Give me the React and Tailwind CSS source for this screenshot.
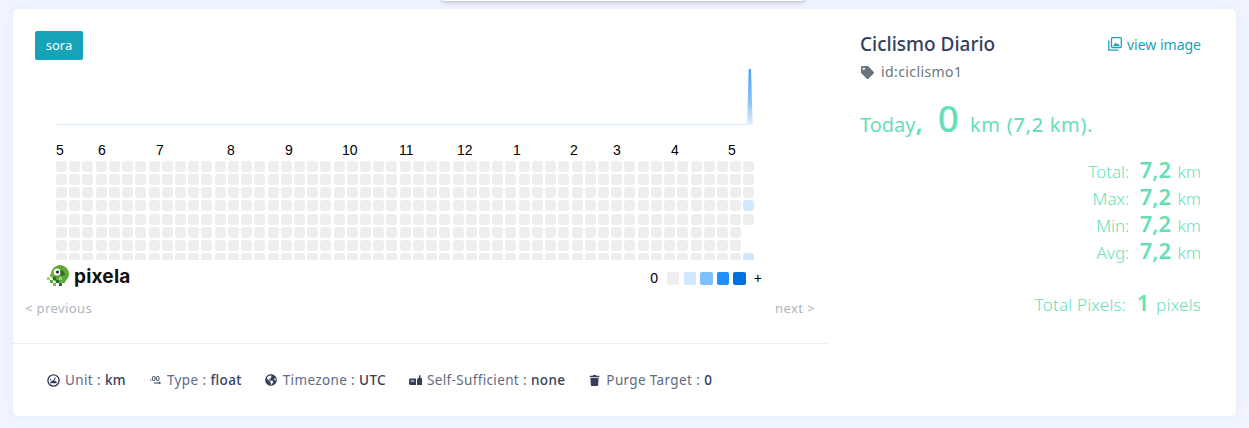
import { FaTag, FaGlobeAmericas, FaTrash } from "react-icons/fa";

const months = [
  { label: "5", width: "w-[42px]" },
  { label: "6", width: "w-[58px]" },
  { label: "7", width: "w-[71px]" },
  { label: "8", width: "w-[58px]" },
  { label: "9", width: "w-[57px]" },
  { label: "10", width: "w-[57px]" },
  { label: "11", width: "w-[58px]" },
  { label: "12", width: "w-[56px]" },
  { label: "1", width: "w-[57px]" },
  { label: "2", width: "w-[43px]" },
  { label: "3", width: "w-[58px]" },
  { label: "4", width: "w-[57px]" },
  { label: "5", width: "w-[20px]" },
];

const legend = ["bg-[#eeeeee]", "bg-[#d0e8ff]", "bg-[#7fbfff]", "bg-[#2090ff]", "bg-[#0070dd]"];

const stats = [
  { label: "Total", value: "7,2" },
  { label: "Max", value: "7,2" },
  { label: "Min", value: "7,2" },
  { label: "Avg", value: "7,2" },
];

// cell colour by column/row, the last column only has a few days
const cellClass = (col, row) => {
  if (col === 52) {
    if (row === 3 || row === 7) return "bg-[#d0e8ff]";
    if (row === 5 || row === 6) return "bg-transparent";
  }
  return "bg-[#eeeeee]";
};

const UnitIcon = () => (
  <svg width="13" height="13" viewBox="0 0 13 13" className="shrink-0">
    <circle cx="6.5" cy="6.5" r="5.6" fill="none" stroke="#34405a" strokeWidth="1.4" />
    <path d="M3 9.2a3.6 3.6 0 0 1 7 0z" fill="#34405a" />
    <path d="M6.5 7L8.4 3.6" stroke="#34405a" strokeWidth="1.1" />
    <rect x="3" y="5" width="1.2" height="1.2" fill="#34405a" />
  </svg>
);

const TypeIcon = () => (
  <svg width="11" height="9" viewBox="0 0 11 9" className="shrink-0">
    <rect x="0" y="3.4" width="1.2" height="1.2" fill="#4a6fa5" />
    <rect x="2.4" y="0.5" width="2.6" height="4" rx="1" fill="none" stroke="#34405a" />
    <rect x="6.4" y="0.5" width="2.6" height="4" rx="1" fill="none" stroke="#34405a" />
    <path d="M4 6.6h5.2V5.4L11 7l-1.8 1.6V7.5H4z" fill="#34405a" />
  </svg>
);

const SelfIcon = () => (
  <svg width="13" height="12" viewBox="0 0 13 12" className="shrink-0">
    <path d="M0 6c0-.9.6-1.4 1.4-1.4H7V11H1.4C.6 11 0 10.5 0 9.6zM1.6 6.4v1h3.6v-1z" fillRule="evenodd" fill="#34405a" />
    <path d="M8 5l1.6-1 .7-3h1l.2 3H13v7H8z" fill="#34405a" />
  </svg>
);

const ImagesIcon = () => (
  <svg width="14" height="14" viewBox="0 0 14 14" fill="none" stroke="currentColor" className="shrink-0">
    <rect x="3.5" y="0.7" width="9.8" height="9.8" rx="1" strokeWidth="1.3" />
    <path d="M0.8 3.5V13.2H10.5" strokeWidth="1.3" />
    <path d="M5 9l2.6-3.4 1.6 1.8 1-1 1.6 2.6z" fill="currentColor" stroke="none" />
  </svg>
);

const Logo = () => (
  <svg width="22" height="22" viewBox="0 0 22 22" className="shrink-0">
    <circle cx="13" cy="9" r="9" fill="#5da83a" />
    <circle cx="10" cy="7" r="3.5" fill="#ffffff" />
    <circle cx="10.5" cy="7" r="1.5" fill="#1a1a1a" />
    <path d="M13 5a6 6 0 0 1 5 5l-4 1z" fill="#2e6b20" />
    <rect x="0" y="12" width="3" height="3" fill="#a8cf7a" />
    <rect x="3" y="9" width="3" height="3" fill="#7bb84f" />
    <rect x="3" y="15" width="3" height="3" fill="#5da83a" />
    <rect x="6" y="12" width="3" height="3" fill="#2e6b20" />
    <rect x="6" y="18" width="3" height="3" fill="#7bb84f" />
    <rect x="9" y="15" width="3" height="3" fill="#2e6b20" />
    <rect x="12" y="18" width="3" height="3" fill="#2e6b20" />
    <rect x="12" y="12" width="3" height="3" fill="#a8cf7a" />
    <rect x="15" y="15" width="3" height="3" fill="#5da83a" />
  </svg>
);

const Meta = ({ icon, label, value }) => (
  <div className="flex items-center gap-[5px]">
    <span className="flex w-[13px] justify-center text-[#34405a]">{icon}</span>
    <span className="tracking-[0.35px]">
      {label}
      <span className="mx-[4px]">:</span>
      <span className="font-medium text-[#34405a]">{value}</span>
    </span>
  </div>
);

export default function App() {
  return (
    <div className="relative h-[428px] overflow-hidden bg-[#f0f5ff] px-[13px] pt-[9px] font-['Noto_Sans',sans-serif]">
      {/* bottom of a dropdown that hangs in from the top */}
      <div className="absolute left-[441px] top-[-10px] h-[11px] w-[364px] rounded bg-white shadow-[0_1px_4px_rgba(0,0,0,0.25)]" />

      <div className="flex h-[407px] rounded-[5px] bg-white shadow-[0_0_12px_rgba(200,215,250,0.3)]">
        <div className="w-[814px] shrink-0">
          <div className="h-[335px] border-b border-[#eeeeee] px-[12px] pt-[22px]">
            <span className="ml-[10px] block h-[29px] w-[48px] rounded-[2px] bg-[#17a2b8] text-center text-[13px] leading-[29px] text-white">sora</span>

            <div className="ml-[31px] mt-[9px] w-[698px]">
              <svg width="698" height="57" viewBox="0 0 698 57" className="block">
                <defs>
                  <linearGradient id="spike" x1="0" y1="0" x2="0" y2="1">
                    <stop offset="0" stopColor="#4d9ff0" />
                    <stop offset="0.6" stopColor="#8cc4f8" />
                    <stop offset="1" stopColor="#e3f0ff" />
                  </linearGradient>
                </defs>
                <path d="M0 55.5H691" stroke="#e3f0ff" strokeWidth="1.5" fill="none" />
                <path d="M691 56L692.7 0H695L696.7 56z" fill="url(#spike)" />
              </svg>

              <div className="mt-[14px] flex h-[20px] font-['Liberation_Sans',sans-serif] text-[14px] leading-[20px] text-black">
                {months.map((m, i) => (
                  <span key={i} className={`${m.width} shrink-0`}>{m.label}</span>
                ))}
              </div>

              <div className="mt-[1px] grid h-[99px] grid-cols-[repeat(53,11.5px)] auto-rows-[11px] gap-x-[1.72px] gap-y-[2.14px] overflow-hidden">
                {Array.from({ length: 53 * 8 }, (_, i) => (
                  <div key={i} className={`h-[11px] w-[11px] rounded-[3px] ${cellClass(i % 53, Math.floor(i / 53))}`} />
                ))}
              </div>
            </div>

            <div className="ml-[22px] mt-[4px] flex h-[24px] items-center">
              <Logo />
              <span className="ml-[5px] font-['Inter',sans-serif] text-[19px] font-bold leading-none tracking-[0.2px] text-[#111111]">pixela</span>
              <div className="ml-auto mr-[53px] mt-[5px] flex items-center font-['Liberation_Sans',sans-serif] text-[14px] text-black">
                <span className="mr-[9px]">0</span>
                <div className="flex gap-[4.1px]">
                  {legend.map((c) => (
                    <div key={c} className={`h-[12.5px] w-[12.5px] rounded-[2px] ${c}`} />
                  ))}
                </div>
                <span className="ml-[8px]">+</span>
              </div>
            </div>

            <div className="mt-[11px] flex justify-between text-[13px] leading-[18px] tracking-[0.4px] text-[#adb5bd]">
              <span>&lt; previous</span>
              <span>next &gt;</span>
            </div>
          </div>

          <div className="flex gap-[23px] pl-[34px] pt-[27px] text-[13.5px] leading-[18px] text-[#5f6b80]">
            <Meta icon={<UnitIcon />} label="Unit" value="km" />
            <Meta icon={<TypeIcon />} label="Type" value="float" />
            <Meta icon={<FaGlobeAmericas size={12} />} label="Timezone" value="UTC" />
            <Meta icon={<SelfIcon />} label="Self-Sufficient" value="none" />
            <Meta icon={<FaTrash size={11} />} label="Purge Target" value="0" />
          </div>
        </div>

        <div className="flex-1 pl-[33px] pr-[35px] pt-[22px] text-[#66dfb6]">
          <div className="flex items-center justify-between">
            <span className="text-[19px] font-medium leading-[26px] text-[#34405a]">Ciclismo Diario</span>
            <span className="flex items-center gap-[5px] text-[14px] text-[#17a2b8]">
              <ImagesIcon />view image
            </span>
          </div>
          <div className="ml-[1px] mt-[5px] flex items-center gap-[7px] text-[14px] leading-[20px] tracking-[0.4px] text-[#6c757d]">
            <FaTag size={13} />id:ciclismo1
          </div>

          <div className="mt-[14px] flex h-[44px] items-baseline text-[20px]">
            <span>Today</span>
            <span className="text-[26px] font-semibold">,</span>
            <span className="ml-[15px] text-[37px] font-medium leading-[44px]">0</span>
            <span className="ml-[11px] tracking-[0.7px]">km (<span className="font-medium">7,2</span> km).</span>
          </div>

          <div className="mt-[18px] text-right text-[17px] font-light leading-[26px]">
            {stats.map((s) => (
              <div key={s.label}>
                {s.label}: <span className="ml-[6px] mr-[2px] text-[22px] font-semibold leading-none">{s.value}</span> km
              </div>
            ))}
          </div>

          <div className="mt-[25px] text-right text-[17px] font-light leading-[26px] tracking-[0.2px]">
            Total Pixels: <span className="ml-[6px] mr-[2px] text-[22px] font-semibold leading-none">1</span> pixels
          </div>
        </div>
      </div>
    </div>
  );
}
